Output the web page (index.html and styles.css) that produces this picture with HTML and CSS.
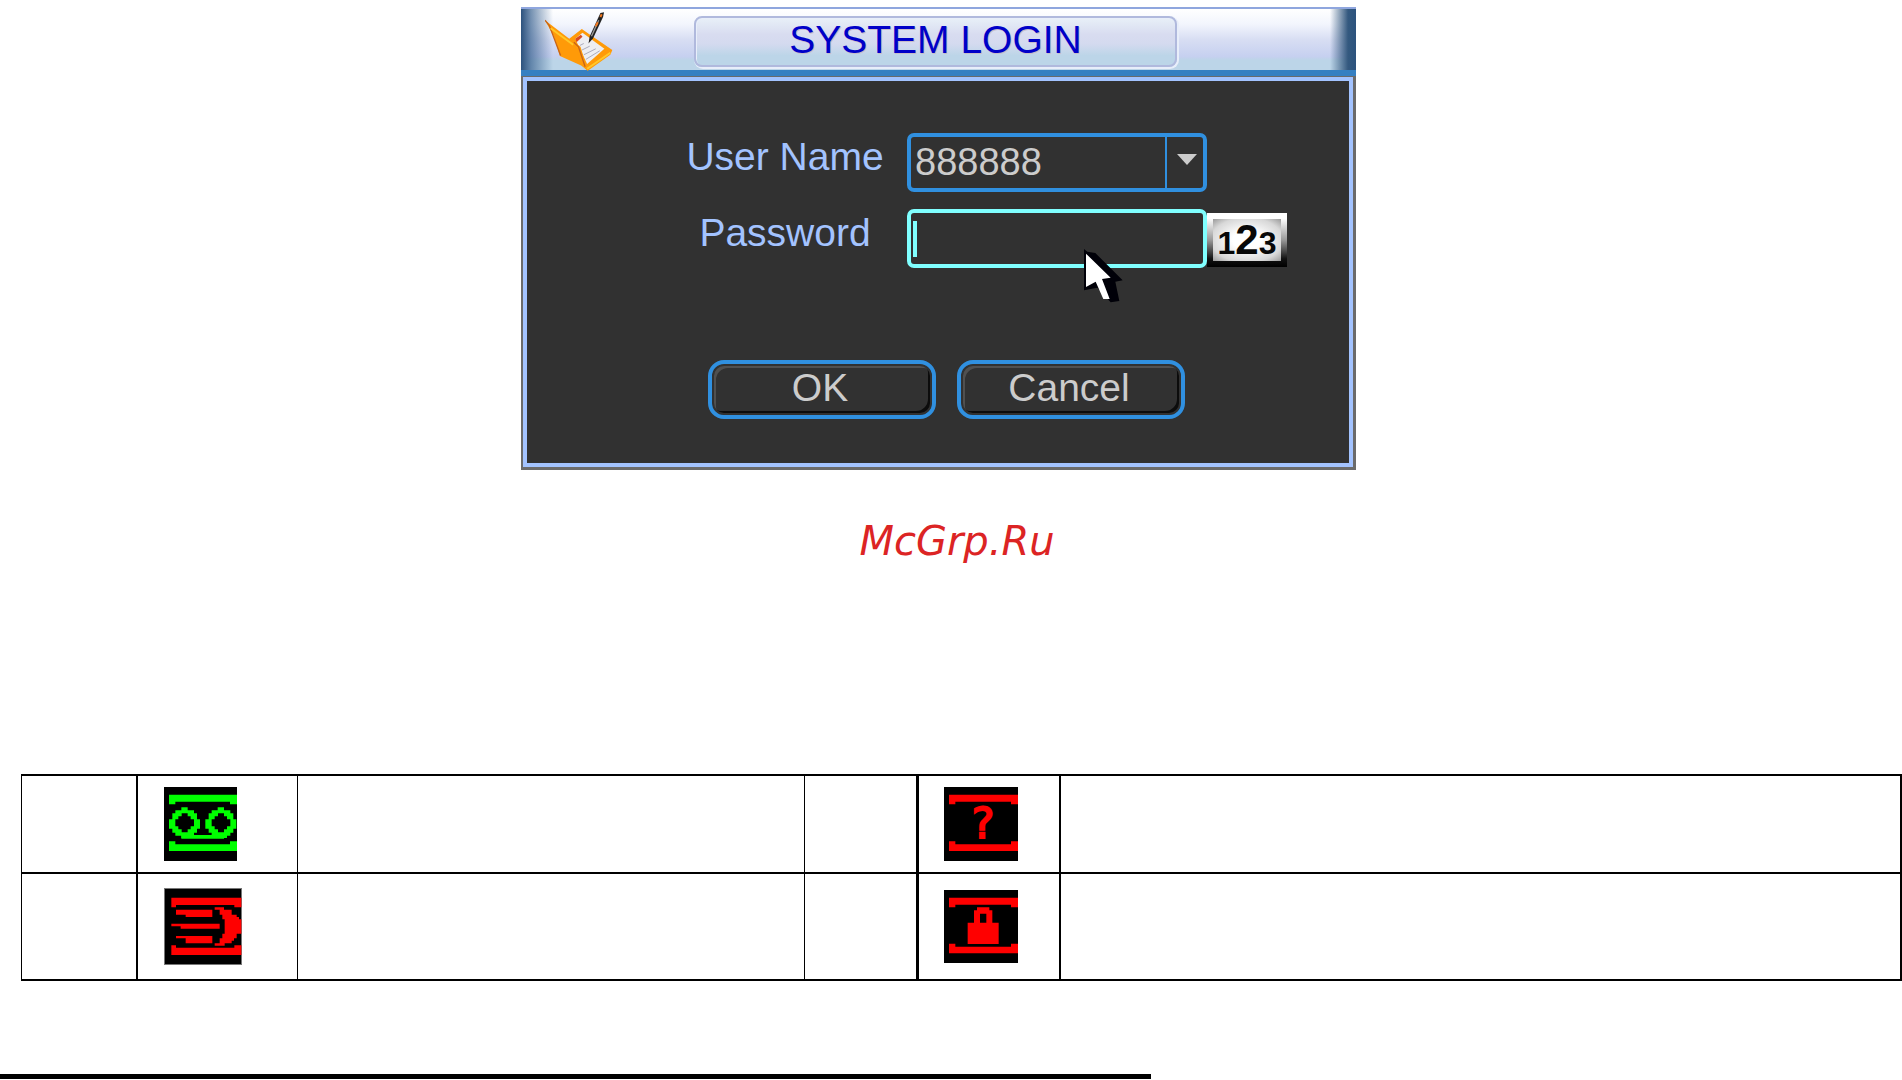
FILE: index.html
```
<!DOCTYPE html>
<html lang="en">
<head>
    <meta charset="UTF-8">
    <meta name="viewport" content="width=device-width, initial-scale=1.0">
    <title>System Login</title>
    <link rel="stylesheet" href="styles.css">
</head>
<body>
    <div class="login-area">
        <div class="dialog">
            <div class="dialog-header">
                <svg class="header-icon" viewBox="105 30 205 185">
                    <path d="M178 116L216 86L244 106L308 150L302 164L234 212L206 185Z" fill="#ff9a08"/>
                    <path d="M196 116L218 98L284 146L232 192Z" fill="#eeeef2"/>
                    <path d="M196 116L213 104L218 110L200 126Z" fill="#d84a20"/>
                    <path d="M210 136L222 130M216 150L240 138M222 164L258 146M228 178L270 152" stroke="#aab" stroke-width="3"/>
                    <path d="M105 60L192 126L212 140L234 212L214 196L150 168L132 110Z" fill="#ff9a08"/>
                    <path d="M105 60L118 76L152 166M192 126L206 140L226 200" stroke="#c86418" stroke-width="4" fill="none"/>
                    <path d="M122 84L190 134M232 206L302 158" stroke="#ffc828" stroke-width="6" fill="none"/>
                    <path d="M236 130L240 108L272 38L283 36L280 50L250 114Z" fill="#222"/>
                    <path d="M245 108L267 60" stroke="#999" stroke-width="4"/>
                    <path d="M258 78L264 66M272 50L276 42" stroke="#f47a20" stroke-width="6"/>
                </svg>
                <h1 class="dialog-title">SYSTEM LOGIN</h1>
            </div>
            <div class="dialog-body">
                <form class="login-form">
                    <div class="row">
                        <label for="user">User Name</label>
                        <div class="field select-field">
                            <select id="user">
                                <option>888888</option>
                            </select>
                        </div>
                    </div>
                    <div class="row">
                        <label for="password">Password</label>
                        <div class="field password-field">
                            <input type="password" id="password">
                            <svg class="pointer" viewBox="0 0 120 165">
                                <path d="M0 0L10 8L34 12L116 94L94 98L106 156L80 160L40 116L0 124Z" fill="#000008"/>
                                <path d="M6 14L80 86L54 90L77 150L58 150L35 98L6 114Z" fill="#fff"/>
                            </svg>
                        </div>
                        <button type="button" class="keypad"><span>1<b>2</b>3</span></button>
                    </div>
                    <div class="actions">
                        <button type="submit">OK</button>
                        <button type="button">Cancel</button>
                    </div>
                </form>
            </div>
        </div>
    </div>

    <p class="site-name">McGrp.Ru</p>

    <table class="icons">
        <colgroup>
            <col class="col-num">
            <col class="col-icon">
            <col class="col-text">
            <col class="col-num-right">
            <col class="col-icon-right">
            <col>
        </colgroup>
        <tr>
            <td></td>
            <td class="icon">
                <svg width="73" height="74" viewBox="0 0 219 222">
                    <rect width="219" height="222"/>
                    <g fill="#0f0">
                        <path d="M15 23H219V52H198V44H34V52H15Z"/>
                        <path d="M15 163H34V172H198V163H219V192H15Z"/>
                        <path id="reel" fill-rule="evenodd" d="M52 61H71V70H90V79H99V97H108V125H99V137H90V146H80V153H52V146H34V137H25V125H15V97H25V79H34V70H52ZM53 79V88H43V97H34V118H43V127H53V136H71V127H80V118H90V97H80V88H71V79Z"/>
                        <use href="#reel" x="109"/>
                        <path d="M52 144H180V155H52Z"/>
                    </g>
                </svg>
            </td>
            <td></td>
            <td></td>
            <td class="icon">
                <svg width="74" height="74" viewBox="0 0 222 222">
                    <rect width="222" height="222"/>
                    <g fill="#f00">
                        <path d="M15 23H222V52H201V44H34V52H15Z"/>
                        <path d="M15 163H34V172H201V163H222V192H15Z"/>
                        <text class="question" x="117" y="152">?</text>
                    </g>
                </svg>
            </td>
            <td></td>
        </tr>
        <tr>
            <td></td>
            <td class="icon">
                <svg width="78" height="77" viewBox="0 0 234 231">
                    <rect width="234" height="231" fill="#777"/>
                    <rect x="3" y="3" width="228" height="225"/>
                    <g fill="#f00">
                        <path d="M22 29H232V58H211V51H36V58H22Z"/>
                        <path d="M22 172H36V179H211V172H232V201H22Z"/>
                        <path d="M36 65H145V87H65V80H36Z"/>
                        <path d="M22 107H167V122H50V115H22Z"/>
                        <path d="M36 144H145V166H65V151H36Z"/>
                        <path d="M152 58H180V65H203V80H218V87H225V94H232V137H218V151H210V158H203V166H182V173H152V166H167V151H175V137H182V94H175V80H167V65H152Z"/>
                    </g>
                </svg>
            </td>
            <td></td>
            <td></td>
            <td class="icon">
                <svg width="74" height="73" viewBox="0 0 222 219">
                    <rect width="222" height="219"/>
                    <g fill="#f00">
                        <path d="M15 23H222V52H201V44H34V52H15Z"/>
                        <path d="M15 161H34V170H201V161H222V190H15Z"/>
                        <path fill-rule="evenodd" d="M71 98H90V61H99V52H136V61H145V98H164V162H71ZM108 71V98H127V71Z"/>
                    </g>
                </svg>
            </td>
            <td></td>
        </tr>
    </table>

    <hr class="footer-line">
</body>
</html>
```
FILE: styles.css
```
* {
    box-sizing: border-box;
}

body {
    margin: 0;
    padding-top: 7px;
    background-color: #fff;
    font-family: "Liberation Sans", Arial, sans-serif;
}

.login-area {
    display: grid;
    grid-template-columns: 521fr 835fr 546fr;
}

.dialog {
    grid-column: 2;
    font-size: 39px;
}

.dialog-header {
    display: grid;
    grid-template-columns: 173fr 483fr 179fr;
    height: 69px;
    border-top: 2px solid #8fa6de;
    border-bottom: 6px solid #3680c2;
    background:
        linear-gradient(to right, #2c527d, rgba(60, 100, 145, 0.7) 10px, rgba(200, 215, 240, 0) 32px),
        linear-gradient(to left, #2c527d, #34597f 8px, rgba(200, 215, 240, 0) 26px),
        linear-gradient(#fff, #f2f5fd 25%, #d8def3 50%, #c6d0f0 78%, #bcd5e8 84%, #bcd5e8);
}

.header-icon {
    width: 68px;
    height: 62px;
    margin: 1px 0 0 24px;
}

.dialog-title {
    height: 51px;
    margin: 7px 0 0;
    border: 2px solid #b0b9dd;
    border-radius: 8px;
    background: linear-gradient(#e8f0f8, #d8dcf0 35%, #d4daef 55%, #bcd5e8 80%);
    box-shadow: 1px 1px 0 1px #e8eefa, inset 1px 1px 0 #e8eefa;
    color: #0000c8;
    font-size: 39px;
    font-weight: normal;
    line-height: 43px;
    text-align: center;
    text-shadow: 1px 1px 0 #c8bcc8;
}

.dialog-body {
    border: solid #6b6b6b;
    border-width: 1px 3px 3px 2px;
}

.login-form {
    padding: 52px 0 44px 158px;
    border: 4px solid #a3c3ff;
    background-color: #313131;
}

.row {
    display: flex;
    align-items: flex-start;
    margin-bottom: 17px;
}

.row label {
    width: 200px;
    margin-right: 22px;
    color: #a3c3ff;
    line-height: 48px;
    text-align: center;
    white-space: nowrap;
}

.field {
    position: relative;
    width: 300px;
    height: 59px;
}

.field select,
.field input {
    appearance: none;
    width: 100%;
    height: 100%;
    padding: 0 4px 2px;
    border: 4px solid #3090e0;
    border-radius: 7px;
    outline: none;
    background-color: #313131;
    color: #ccc;
    font-family: inherit;
    font-size: 38px;
}

.field input {
    border-color: #80ffff;
}

/* drop-down divider and arrow */
.select-field::before {
    content: "";
    position: absolute;
    top: 4px;
    right: 40px;
    width: 2px;
    height: 51px;
    background-color: #3090e0;
}

.select-field::after {
    content: "";
    position: absolute;
    top: 21px;
    right: 10px;
    border: solid transparent;
    border-width: 11px 10px 0;
    border-top-color: #ccc;
}

/* text caret */
.password-field::before {
    content: "";
    position: absolute;
    top: 12px;
    left: 6px;
    width: 4px;
    height: 36px;
    background-color: #80ffff;
}

.pointer {
    position: absolute;
    top: 40px;
    left: 177px;
    width: 40px;
    height: 55px;
}

.keypad {
    width: 80px;
    height: 54px;
    margin-top: 4px;
    padding: 6px;
    border: none;
    background: linear-gradient(#fff 10%, #999 50%, #111 85%, #000);
    color: #080808;
    font-family: inherit;
    font-size: 32px;
    font-weight: bold;
}

.keypad span {
    display: block;
    height: 42px;
    background: radial-gradient(#fff 30%, #d8d8d8 75%, #999);
    line-height: 42px;
}

.keypad b {
    font-size: 42px;
}

.actions {
    display: flex;
    gap: 21px;
    margin: 92px 0 0 23px;
}

.actions button {
    width: 228px;
    height: 59px;
    padding: 0 4px 3px 0;
    border: 4px solid #3090e0;
    border-radius: 16px;
    background-color: #313131;
    box-shadow: inset 0 0 0 2px #313131, inset 4px 4px 0 #505050, inset -4px -4px 0 #0c0c0c;
    color: #ccc;
    font-family: inherit;
    font-size: 39px;
}

.site-name {
    margin: 48px 0 209px;
    padding-left: 12px;
    color: #dc2424;
    font-family: "DejaVu Sans", sans-serif;
    font-size: 40px;
    font-style: italic;
    line-height: 47px;
    text-align: center;
}

.icons {
    width: calc(100% - 21px);
    margin-left: 21px;
    border-spacing: 0;
    table-layout: fixed;
}

.col-num {
    width: 115px;
}

.col-icon {
    width: 161px;
}

.col-text {
    width: 507px;
}

.col-num-right {
    width: 112px;
}

.col-icon-right {
    width: 143px;
}

.icons td {
    height: 98px;
    padding: 0;
    border: solid #000;
    border-width: 2px 0 0 1px;
    vertical-align: middle;
}

.icons tr:last-child td {
    height: 109px;
    border-bottom-width: 2px;
}

.icons td:nth-child(2),
.icons td:last-child {
    border-left-width: 2px;
}

.icons td:nth-child(5) {
    border-left-width: 3px;
}

.icons td:last-child {
    border-right-width: 2px;
}

.icons td.icon {
    padding-left: 26px;
}

.icons td.icon:nth-child(5) {
    padding-left: 25px;
}

.icons svg {
    display: block;
}

.question {
    font-family: "DejaVu Sans", sans-serif;
    font-size: 128px;
    stroke: #f00;
    stroke-width: 6px;
    text-anchor: middle;
}

.footer-line {
    width: 60.5%;
    height: 5px;
    margin: 93px 0 0;
    border: none;
    background-color: #000;
}
```
